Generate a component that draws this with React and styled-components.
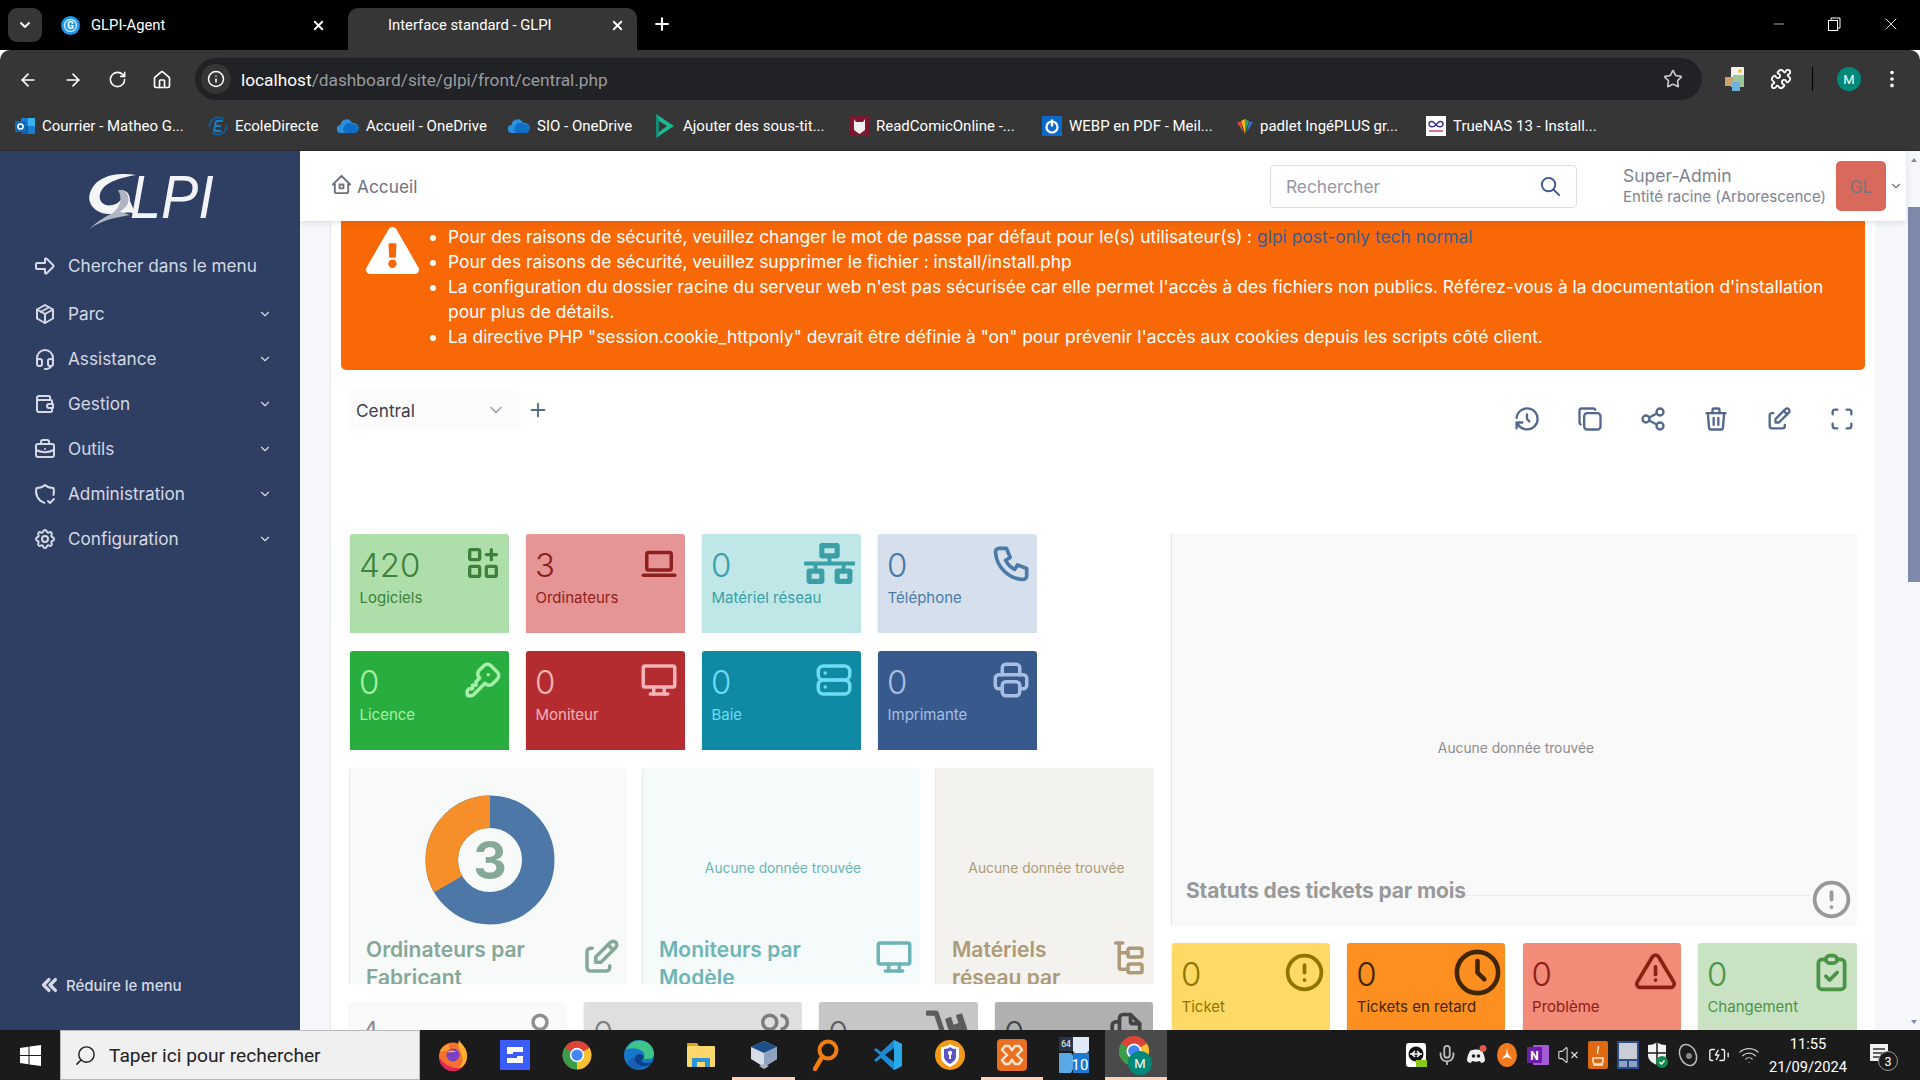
import React from 'react'
import styled, { createGlobalStyle } from 'styled-components'
import {
  TbArrowBigRight, TbPackage, TbHeadset, TbWallet, TbBriefcase, TbShieldCheck, TbSettings,
  TbChevronDown, TbChevronsLeft, TbHome2, TbSearch, TbHistory, TbCopy, TbShare, TbTrash,
  TbEdit, TbMaximize, TbPlus, TbApps, TbDeviceLaptop, TbPhone, TbKey, TbDeviceDesktop,
  TbServer, TbPrinter, TbAlertCircle, TbClock, TbAlertTriangle, TbClipboardCheck,
  TbUser, TbUsers, TbFiles,
} from 'react-icons/tb'
import { FaExclamationTriangle, FaNetworkWired, FaDolly } from 'react-icons/fa'
import {
  ArrowLeft, ArrowRight, RotateCw, Home, Info, Star, Puzzle, EllipsisVertical, ChevronDown,
  X, Plus, Minus, Search, Mic, VolumeX, Wifi, BatteryCharging,
} from 'lucide-react'

const GlobalStyle = createGlobalStyle`
  html, body { margin: 0; padding: 0; height: 100%; overflow: hidden; }
  * { box-sizing: border-box; }
  body { font-family: Inter, "Liberation Sans", sans-serif; }
`

const Screen = styled.div`
  width: 1920px;
  height: 1080px;
  display: flex;
  flex-direction: column;
  overflow: hidden;
`

/* browser chrome */
const TabStrip = styled.div`
  height: 50px;
  background: #000;
  display: flex;
  align-items: flex-end;
  color: #fff;
  font-family: Roboto, sans-serif;
  font-size: 14.8px;
`
const TabMenu = styled.div`
  width: 34px;
  height: 34px;
  margin: 0 0 8px 8px;
  border-radius: 9px;
  background: #363636;
  display: flex;
  align-items: center;
  justify-content: center;
`
const Tab = styled.div`
  width: ${p => p.$w}px;
  height: 42px;
  padding: ${p => p.$active ? '0 12px 8px 40px' : '0 22px 8px 19px'};
  border-radius: 10px 10px 0 0;
  background: ${p => p.$active ? '#363636' : 'transparent'};
  display: flex;
  align-items: center;
  gap: 11px;
`
const TabTitle = styled.span`
  flex: 1;
  white-space: nowrap;
`
const NewTab = styled.div`
  margin: 0 0 14px 15px;
  height: 22px;
`
const WindowControls = styled.div`
  margin-left: auto;
  align-self: flex-start;
  height: 48px;
  display: flex;
  align-items: center;
  gap: 40px;
  padding-right: 19px;
`
const Toolbar = styled.div`
  height: 50px;
  background: #363636;
  border-radius: 10px 10px 0 0;
  display: flex;
  align-items: flex-end;
  color: #fff;
  font-family: Roboto, sans-serif;
`
const NavButtons = styled.div`
  width: 195px;
  height: 42px;
  padding: 1px 0 0 18px;
  display: flex;
  align-items: center;
  gap: 25px;
`
const Omnibox = styled.div`
  width: 1507px;
  height: 42px;
  border-radius: 21px;
  background: #212226;
  display: flex;
  align-items: center;
  padding: 0 19px 0 6px;
`
const InfoBubble = styled.div`
  width: 30px;
  height: 30px;
  border-radius: 50%;
  background: #363636;
  display: flex;
  align-items: center;
  justify-content: center;
  margin-right: 10px;
`
const Url = styled.div`
  flex: 1;
  font-size: 17.3px;
  color: #fff;
  padding-top: 2px;
  span { color: #9a9b9e; }
`
const ToolbarEnd = styled.div`
  flex: 1;
  height: 42px;
  display: flex;
  align-items: center;
  padding-left: 23px;
`
const ExtGap = styled.span`
  width: 25px;
`
const Divider = styled.div`
  width: 1px;
  height: 24px;
  background: #000;
  margin: 0 24px 0 20px;
`
const ProfileDot = styled.div`
  width: 24px;
  height: 24px;
  border-radius: 50%;
  background: #00897b;
  color: #fff;
  font-size: 13px;
  display: flex;
  align-items: center;
  justify-content: center;
  margin-right: 20px;
`
const Bookmarks = styled.div`
  height: 51px;
  background: #363636;
  display: flex;
  align-items: center;
  padding: 2px 0 0 15px;
  color: #fff;
  font-family: Roboto, sans-serif;
  font-size: 15px;
  border-bottom: 1px solid #2b2b2b;
`
const Bookmark = styled.div`
  width: ${p => p.$w}px;
  display: flex;
  align-items: center;
  gap: ${p => p.$gap || 7}px;
  white-space: nowrap;
  svg { flex: none; }
`

/* page body */
const Body = styled.div`
  flex: 1;
  min-height: 0;
  display: flex;
`
const Sidebar = styled.aside`
  width: 300px;
  background: #2f3f64;
  color: #d5d9e3;
  display: flex;
  flex-direction: column;
`
const LogoWrap = styled.div`
  height: 92px;
  padding: 22px 0 0 88px;
  display: flex;
  align-items: flex-start;
`
const LogoText = styled.span`
  font-family: "Liberation Sans", sans-serif;
  font-style: italic;
  font-size: 62px;
  line-height: 48px;
  color: #f2f3f6;
  margin-left: -8px;
  transform: scaleX(0.9);
  transform-origin: left center;
`
const MenuItem = styled.div`
  height: 45px;
  padding: 0 28px 0 33px;
  display: flex;
  align-items: center;
  gap: 11px;
  font-size: 17.2px;
  margin-bottom: ${p => p.$mb || 0}px;
  span { flex: 1; }
`
const Reduce = styled.div`
  margin-top: auto;
  margin-bottom: 32px;
  padding-left: 37px;
  display: flex;
  align-items: center;
  gap: 3px;
  font-size: 15px;
  font-weight: 500;
  height: 26px;
`
const MainCol = styled.div`
  flex: 1;
  min-width: 0;
  display: flex;
  flex-direction: column;
  position: relative;
  background: #f5f7fb;
`
const Header = styled.header`
  height: 70px;
  background: #fff;
  box-shadow: 0 2px 6px rgba(30, 40, 70, 0.12);
  display: flex;
  align-items: center;
  padding: 0 0 0 30px;
  color: #6c7280;
  position: relative;
  z-index: 2;
`
const Crumb = styled.div`
  display: flex;
  align-items: center;
  gap: 4px;
  font-size: 17.3px;
  svg { margin-top: -4px; }
`
const SearchBox = styled.div`
  margin-left: auto;
  width: 307px;
  height: 43px;
  border: 1px solid #dadde3;
  border-radius: 4px;
  display: flex;
  align-items: center;
  justify-content: space-between;
  padding: 0 14px 0 15px;
  font-size: 17.3px;
  color: #9298a6;
`
const UserBlock = styled.div`
  margin-left: 46px;
  width: 213px;
  color: #7d8390;
`
const UserName = styled.div`
  font-size: 17.5px;
  line-height: 22px;
`
const UserEntity = styled.div`
  font-size: 15px;
  line-height: 20px;
`
const UserAvatar = styled.div`
  width: 50px;
  height: 50px;
  border-radius: 5px;
  background: #d9695a;
  color: #73787f;
  font-size: 17.5px;
  display: flex;
  align-items: center;
  justify-content: center;
`
const UserCaret = styled.div`
  width: 20px;
  display: flex;
  justify-content: center;
  color: #6c7280;
`
const Content = styled.div`
  flex: 1;
  min-height: 0;
  overflow: hidden;
  padding: 0 31px 0 30px;
`
const Panel = styled.main`
  background: #fff;
  border-left: 1px solid #e6e8ee;
  padding: 0 10px;
  height: 100%;
`
const Alert = styled.div`
  background: #f96807;
  color: #fff;
  border-radius: 0 0 5px 5px;
  padding: 3px 20px 21px 25px;
  display: flex;
  font-size: 17.4px;
  line-height: 25px;
  svg { flex: none; }
`
const AlertList = styled.ul`
  margin: 0;
  padding: 0 0 0 29px;
  a { color: #3f5a97; text-decoration: none; }
`
const DashBar = styled.div`
  margin-top: 20px;
  height: 40px;
  padding: 0 9px 0 7px;
  display: flex;
  align-items: center;
`
const DashSelect = styled.div`
  width: 173px;
  height: 40px;
  background: #fcfcfd;
  border-radius: 4px;
  padding: 0 15px 0 8px;
  display: flex;
  align-items: center;
  justify-content: space-between;
  font-size: 17.3px;
  color: #39404d;
  margin-right: 6px;
`
const DashActions = styled.div`
  margin-left: auto;
  display: flex;
  gap: 35px;
  color: #53688e;
  padding-top: 18px;
`
const Dashboard = styled.div`
  margin-top: 104px;
  padding-left: 9px;
  display: flex;
  gap: 18px;
  align-items: flex-start;
`
const LeftCol = styled.div`
  width: 804px;
  display: flex;
  flex-direction: column;
  gap: 18px;
`
const RightCol = styled.div`
  width: 685px;
  display: flex;
  flex-direction: column;
  gap: 18px;
`
const CardRow = styled.div`
  display: flex;
  gap: ${p => p.$gap || 17}px;
`
const Card = styled.div`
  flex: 0 0 ${p => p.$w}px;
  min-width: 0;
  height: 99px;
  padding: 0 ${p => p.$pr}px 0 10px;
  background: ${p => p.$bg};
  color: ${p => p.$fg};
  border-radius: 3px 3px 0 0;
  box-shadow: -1px 0 1px rgba(0, 0, 0, 0.06);
  display: flex;
  justify-content: space-between;
`
const CardText = styled.div`
  flex: 1 1 0;
  min-width: 0;
`
const CardNumber = styled.div`
  font-size: 33px;
  font-weight: 300;
  line-height: 40px;
  margin: 11px 0 0 -1px;
`
const CardLabel = styled.div`
  font-size: 15px;
  line-height: 20px;
  margin: 3px 0 0 -0.5px;
  white-space: nowrap;
`
const CardIcon = styled.div`
  height: 58px;
  flex: none;
  display: flex;
  align-items: center;
`
const ChartCard = styled.div`
  flex: 0 0 ${p => p.$w}px;
  height: 216px;
  overflow: hidden;
  background: ${p => p.$bg};
  color: ${p => p.$fg};
  border-radius: 3px 3px 0 0;
  box-shadow: -1px 0 1px rgba(0, 0, 0, 0.1);
`
const ChartArea = styled.div`
  height: 168px;
  display: flex;
  align-items: ${p => p.$top ? 'flex-start' : 'center'};
  justify-content: center;
  padding-top: ${p => p.$pt}px;
  padding-left: 3px;
  font-size: 13.8px;
`
const ChartFoot = styled.div`
  display: flex;
  justify-content: space-between;
  padding: 0 5px 0 16px;
  svg { flex: none; }
`
const ChartTitle = styled.div`
  font-size: 21px;
  font-weight: 600;
  line-height: 28px;
`
const StatusCard = styled.div`
  height: 391px;
  background: #f9f9f9;
  color: #999;
  box-shadow: -1px 0 1px rgba(0, 0, 0, 0.1);
  display: flex;
  flex-direction: column;
`
const StatusArea = styled.div`
  flex: 1;
  display: flex;
  align-items: center;
  justify-content: center;
  padding-top: 86px;
  padding-left: 3px;
  font-size: 13.8px;
  color: #8d8d8d;
`
const StatusFoot = styled.div`
  height: 50px;
  display: flex;
  padding: 0 3px 0 14px;
  align-items: flex-start;
  svg { margin-top: 2px; }
`
const StatusTitle = styled.div`
  font-size: 21px;
  font-weight: 700;
  letter-spacing: -0.15px;
  line-height: 32px;
`
const DottedLine = styled.div`
  flex: 1;
  margin-top: 20px;
  border-top: 1px dotted #ddd;
`
const ScrollTrack = styled.div`
  width: 14px;
  background: #f5f7fb;
  display: flex;
  flex-direction: column;
  align-items: flex-end;
`
const ScrollArrow = styled.div`
  width: 12px;
  height: 17px;
  display: flex;
  align-items: center;
  justify-content: center;
  margin-top: ${p => p.$auto ? 'auto' : '0'};
  &::after {
    content: '';
    border-left: 3.5px solid transparent;
    border-right: 3.5px solid transparent;
    ${p => p.$down ? 'border-top: 4px solid #7f8aab;' : 'border-bottom: 4px solid #7f8aab;'}
  }
`
const ScrollThumb = styled.div`
  width: 12px;
  height: 375px;
  margin-top: 39px;
  background: #7f8aab;
`

/* taskbar */
const Taskbar = styled.footer`
  height: 50px;
  background: #1b1b1b;
  display: flex;
  align-items: stretch;
  font-family: Roboto, sans-serif;
  color: #fff;
`
const StartButton = styled.div`
  width: 60px;
  flex: none;
  display: flex;
  align-items: center;
  justify-content: center;
`
const TaskSearch = styled.div`
  width: 360px;
  flex: none;
  margin-right: 2px;
  background: #f0f0f0;
  border: 1px solid #b8b8b8;
  color: #222;
  font-size: 19.2px;
  display: flex;
  align-items: center;
  gap: 12px;
  padding-left: 13px;
  svg { transform: scaleX(-1); }
`
const TaskApp = styled.div`
  width: 62.1px;
  flex: none;
  display: flex;
  align-items: center;
  justify-content: center;
  background: ${p => p.$active ? '#4a4a4a' : 'transparent'};
  border-bottom: 3px solid ${p => p.$open ? '#ffd2b5' : 'transparent'};
  border-top: 3px solid transparent;
`
const Tray = styled.div`
  margin-left: auto;
  flex: none;
  display: flex;
  align-items: center;
`
const TrayIcon = styled.div`
  width: 30.2px;
  display: flex;
  justify-content: center;
`
const Clock = styled.div`
  width: 88px;
  padding-top: 1px;
  text-align: center;
  font-size: 14.7px;
  line-height: 23px;
`
const Notification = styled.div`
  width: 36px;
  margin-left: 15px;
  margin-right: 17px;
  position: relative;
  display: flex;
`
const NotifBadge = styled.div`
  position: absolute;
  left: 11px;
  top: 9px;
  width: 20px;
  height: 20px;
  border-radius: 50%;
  background: #1b1b1b;
  border: 1.5px solid #999;
  font-size: 12.5px;
  display: flex;
  align-items: center;
  justify-content: center;
`

/* drawn logos */
const GlpiFav = () => (
  <svg width="19" height="19" viewBox="0 0 19 19">
    <circle cx="9.5" cy="9.5" r="9.5" fill="#1d97e6" />
    <circle cx="9.5" cy="9.5" r="6" fill="none" stroke="#bfe4fb" strokeWidth="1.5" />
    <text x="9.5" y="13" textAnchor="middle" fontSize="10" fontWeight="700" fill="#fff" fontFamily="Roboto">G</text>
  </svg>
)
const Swoosh = () => (
  <svg width="50" height="56" viewBox="0 0 50 56">
    <path d="M48 2 C30 -1 8 2 2 20 C-2 32 10 42 24 41 C36 40 44 38 48 42 L42 28 C42 22 40 16 30 17 C36 20 36 26 28 31 C18 35 10 30 12 21 C15 10 30 5 48 2Z" fill="#f4f5f7" />
    <path d="M42 42 C32 44 14 46 2 56 C10 47 20 42 30 38 Z" fill="#aeb4c2" />
    <path d="M30 17 C38 16 42 22 40 30 C38 36 30 40 24 41 C30 36 36 28 30 17Z" fill="#aeb4c2" />
  </svg>
)
const OutlookIcon = () => (
  <svg width="20" height="20" viewBox="0 0 20 20">
    <rect x="6" y="2" width="14" height="16" rx="1" fill="#1b7fd1" />
    <rect x="13" y="2" width="7" height="8" fill="#35b3ee" />
    <rect x="6" y="10" width="7" height="8" fill="#0f5ea8" />
    <rect x="0" y="5" width="11" height="11" rx="1" fill="#0f6cbd" />
    <circle cx="5.5" cy="10.5" r="2.6" fill="none" stroke="#fff" strokeWidth="1.5" />
  </svg>
)
const EcoleIcon = () => (
  <svg width="20" height="20" viewBox="0 0 20 20">
    <circle cx="10" cy="10" r="8.5" fill="none" stroke="#0f5d94" strokeWidth="2" strokeDasharray="20 6" />
    <path d="M8 5h7M7 10h6M6 15h7M8 5 6 15" stroke="#1580c4" strokeWidth="2" fill="none" />
  </svg>
)
const CloudIcon = () => (
  <svg width="22" height="16" viewBox="0 0 22 16">
    <path d="M4 15a4 4 0 0 1-.5-8A6 6 0 0 1 15 5a4.5 4.5 0 0 1 3 10Z" fill="#2a8fdc" />
    <path d="M7 9a5 5 0 0 1 8-3 4.5 4.5 0 0 1 3 9H9a4 4 0 0 1-2-6Z" fill="#0f6fc6" />
  </svg>
)
const KapwingIcon = () => (
  <svg width="18" height="24" viewBox="0 0 18 24">
    <path d="M0 0 18 12 0 24l3-6 8-6-8-5Z" fill="#1cb890" />
    <path d="M0 0v24l3-6V6Z" fill="#128c78" />
  </svg>
)
const ComicIcon = () => (
  <svg width="19" height="20" viewBox="0 0 19 20">
    <rect width="19" height="20" fill="#7c1730" />
    <path d="M4 3l2 3h7l2-3v11l-5.500 4L4 14Z" fill="#f0f0f0" />
  </svg>
)
const WebpIcon = () => (
  <svg width="20" height="20" viewBox="0 0 20 20">
    <rect width="20" height="20" fill="#0b6ac8" />
    <circle cx="10" cy="11" r="5.500" fill="none" stroke="#fff" strokeWidth="2.2" />
    <path d="M10 3.500v7" stroke="#fff" strokeWidth="2.4" />
  </svg>
)
const PadletIcon = () => (
  <svg width="16" height="20" viewBox="0 0 16 20">
    <path d="M0 6 6 16 4 6Z" fill="#e4443c" />
    <path d="M4 5 8 18 8 3Z" fill="#f6b01d" />
    <path d="M8 3 8 18 12 5Z" fill="#2ca85a" />
    <path d="M12 6 10 16 16 6Z" fill="#3a6fd8" />
  </svg>
)
const TrueNasIcon = () => (
  <svg width="20" height="20" viewBox="0 0 20 20">
    <rect width="20" height="20" fill="#fff" />
    <path d="M10 9C7 4 3 5 3 8s4 4 7 1c3-5 7-4 7-1s-4 4-7 1" fill="none" stroke="#3b2e8f" strokeWidth="1.4" />
    <rect x="3" y="14" width="14" height="2" fill="#d9708b" />
  </svg>
)
const MultiExtIcon = () => (
  <svg width="20" height="26" viewBox="0 0 20 26">
    <rect x="6" y="1" width="13" height="20" rx="1" fill="#f2f2f2" />
    <rect x="8" y="9" width="11" height="12" fill="#9ac79a" />
    <circle cx="15" cy="5" r="2" fill="#f5c242" />
    <rect x="0" y="11" width="8" height="9" fill="#c9a36b" />
    <rect x="7" y="16" width="8" height="9" fill="#6fb1dc" />
  </svg>
)
const WinLogo = () => (
  <svg width="21" height="21" viewBox="0 0 21 21">
    <path d="M0 3l8.500-1.200v8.200H0ZM9.500 1.600 21 0v10H9.500ZM0 11h8.500v8.200L0 18ZM9.500 11H21v10l-11.500-1.600Z" fill="#fff" />
  </svg>
)
const Firefox = () => (
  <svg width="30" height="32" viewBox="0 0 30 32">
    <circle cx="15" cy="17.500" r="14" fill="#f5712c" />
    <path d="M21 1c2 4 8 7 8 16a14 14 0 0 1-14 14c8-2 11-8 9-14-1-5-5-8-3-16Z" fill="#ffb22e" />
    <path d="M2 12c3-5 7-7 10-7-2 3-1 5 2 6-6 0-9 2-12 1Z" fill="#ff9a2e" />
    <path d="M1 18a14 14 0 0 0 24 10c-8 3-17 0-24-10Z" fill="#e3235e" />
    <circle cx="15" cy="16" r="6.500" fill="#7a3fc2" />
    <path d="M9 13c3-2 7-2 9 0-4 0-7 1-9 0Z" fill="#ffb22e" />
  </svg>
)
const Scaleway = () => (
  <svg width="30" height="30" viewBox="0 0 30 30">
    <rect width="30" height="30" fill="#3b5cff" />
    <path d="M7 7h16v5H13v2H7ZM23 23H7v-5h10v-2h6Z" fill="#fff" />
  </svg>
)
const Chrome = ({ size = 30 }) => (
  <svg width={size} height={size} viewBox="0 0 48 48">
    <circle cx="24" cy="24" r="23" fill="#db4437" />
    <path d="M24 24 44 12.500A23 23 0 0 1 24 47Z" fill="#fbc02d" />
    <path d="M24 24 24 47A23 23 0 0 1 4 12.500Z" fill="#3a9d4a" />
    <circle cx="24" cy="24" r="11.500" fill="#fff" />
    <circle cx="24" cy="24" r="9" fill="#4285f4" />
  </svg>
)
const Edge = () => (
  <svg width="30" height="30" viewBox="0 0 30 30">
    <circle cx="15" cy="15" r="15" fill="#1477c9" />
    <path d="M2 10C5 2 13-1 20 1c6 2 10 7 10 13 0 4-3 5-6 5h-6c3-2 3-6 0-8-6-4-13-3-16-1Z" fill="#3cc48a" />
    <path d="M20 17c-2-4-8-4-9 1-1 5 5 9 11 8 3-1 5-2 6-4-5 2-10 1-12-2 1 1 3 0 4-3Z" fill="#0b3f86" />
    <path d="M11 18c-1 5 5 9 11 8-7 4-15 3-18-3 2-5 5-7 7-5Z" fill="#1a5fb4" />
  </svg>
)
const Explorer = () => (
  <svg width="28" height="26" viewBox="0 0 28 26">
    <path d="M0 2a1 1 0 0 1 1-1h9l2 3h-12Z" fill="#dba21e" />
    <rect y="4" width="28" height="21" rx="1" fill="#f9d76b" />
    <path d="M5 25v-8a1 1 0 0 1 1-1h16a1 1 0 0 1 1 1v8h-5v-5h-8v5Z" fill="#2e93d8" />
  </svg>
)
const VBox = () => (
  <svg width="28" height="30" viewBox="0 0 28 30">
    <path d="M14 1 27 7v12l-13 8L1 19V7Z" fill="#d7dde8" />
    <path d="M14 1 27 7 14 13 1 7Z" fill="#1d4f8a" />
    <path d="M14 13v14l13-8V7Z" fill="#8ea2bd" />
    <path d="M9 26l5 3 5-3-5-2Z" fill="#aab6c6" />
  </svg>
)
const Magnifier = () => (
  <svg width="26" height="32" viewBox="0 0 26 32">
    <circle cx="15" cy="11" r="8.500" fill="none" stroke="#ef7d0f" strokeWidth="4" />
    <path d="M9 18 2 30" stroke="#ef7d0f" strokeWidth="4.500" strokeLinecap="round" />
  </svg>
)
const VSCode = () => (
  <svg width="28" height="30" viewBox="0 0 28 30">
    <path d="M20 0 28 4v22l-8 4L7 18 2 22 0 20l6-5-6-5 2-2 5 4Z" fill="#1f8ad2" />
    <path d="M20 8 11 15l9 7Z" fill="#1b1b1b" />
    <path d="M20 0 28 4v22l-8 4Z" fill="#2ba8ea" />
  </svg>
)
const ShieldApp = () => (
  <svg width="30" height="30" viewBox="0 0 30 30">
    <circle cx="15" cy="15" r="15" fill="#f49a1a" />
    <path d="M6 7c5 0 7-2 9-3 2 1 4 3 9 3v10c0 5-5 8-9 10-4-2-9-5-9-10Z" fill="#fff" />
    <path d="M9 9c3 0 5-1 6-2 1 1 3 2 6 2v7c0 4-3 6-6 8-3-2-6-4-6-8Z" fill="#5a54c4" />
    <circle cx="15" cy="13" r="2.200" fill="#fff" />
    <rect x="14" y="14" width="2" height="5" fill="#fff" />
  </svg>
)
const Xampp = () => (
  <svg width="30" height="32" viewBox="0 0 30 32">
    <rect width="30" height="32" rx="4" fill="#e96f21" />
    <path d="M8 7h4l3 4 3-4h4l3 4-5 5 5 5-3 4h-4l-3-4-3 4H8l-3-4 5-5-5-5Z" fill="none" stroke="#fbe3cf" strokeWidth="2.400" />
  </svg>
)
const WinTen = () => (
  <svg width="30" height="36" viewBox="0 0 30 36">
    <rect width="14" height="14" fill="#273649" />
    <text x="7" y="10" textAnchor="middle" fontSize="8.500" fill="#fff" fontFamily="Roboto">64</text>
    <path d="M14 0h16v14L21 22 14 14Z" fill="#dfeaf6" />
    <path d="M0 16h12l6 8-6 12H0Z" fill="#5aa9e6" />
    <rect x="14" y="16" width="16" height="20" fill="#1f78d1" />
    <text x="21" y="33" textAnchor="middle" fontSize="15" fill="#fff" fontFamily="Roboto">10</text>
  </svg>
)
const ChromeProfile = () => (
  <svg width="34" height="42" viewBox="0 0 34 42">
    <g transform="translate(0 2)">
      <circle cx="15" cy="15" r="15" fill="#db4437" />
      <path d="M15 15 28 7.500A15 15 0 0 1 15 30Z" fill="#fbc02d" />
      <path d="M15 15 15 30A15 15 0 0 1 2 7.500Z" fill="#3a9d4a" />
      <circle cx="15" cy="15" r="7.500" fill="#fff" />
      <circle cx="15" cy="15" r="5.800" fill="#4285f4" />
    </g>
    <circle cx="21" cy="29" r="12" fill="#00897b" />
    <text x="21" y="34" textAnchor="middle" fontSize="13" fill="#fff" fontFamily="Roboto">M</text>
  </svg>
)
const TeamViewer = () => (
  <svg width="22" height="24" viewBox="0 0 22 24">
    <rect width="20" height="24" rx="3" fill="#fff" />
    <circle cx="10" cy="11" r="7.500" fill="#111" />
    <path d="M4 11h12M6 11l3-3M6 11l3 3M14 11l-3-3M14 11l-3 3" stroke="#fff" strokeWidth="1.500" />
    <rect x="10" y="17" width="11" height="7" fill="#8bc816" />
  </svg>
)
const Discord = () => (
  <svg width="22" height="20" viewBox="0 0 22 20">
    <path d="M4 6c3-2 9-2 12 0 2 3 3 7 3 10-1 1-3 2-4 2l-1-2c-3 1-5 1-8 0l-1 2c-1 0-3-1-4-2 0-3 1-7 3-10Z" fill="#f0f0f0" />
    <circle cx="7.500" cy="11" r="1.800" fill="#1b1b1b" />
    <circle cx="12.500" cy="11" r="1.800" fill="#1b1b1b" />
    <circle cx="17" cy="3.500" r="3.500" fill="#e0584d" />
  </svg>
)
const RssApp = () => (
  <svg width="20" height="24" viewBox="0 0 20 24">
    <ellipse cx="10" cy="12" rx="10" ry="12" fill="#f47a1f" />
    <path d="M10 5l1 6 4 5-5-2-5 2 4-5Z" fill="#fff" />
  </svg>
)
const OneNote = () => (
  <svg width="22" height="24" viewBox="0 0 22 24">
    <rect x="6" y="2" width="16" height="20" rx="1" fill="#a45cd6" />
    <rect x="0" y="4" width="15" height="16" fill="#6b1fa8" />
    <text x="7.500" y="17" textAnchor="middle" fontSize="12" fontWeight="700" fill="#fff" fontFamily="Roboto">N</text>
  </svg>
)
const JavaApp = () => (
  <svg width="20" height="28" viewBox="0 0 20 28">
    <rect width="20" height="28" rx="2" fill="#dd6a13" />
    <path d="M5 17h10v3a3 3 0 0 1-3 3H8a3 3 0 0 1-3-3ZM10 5c2 3-2 4 0 8M5 24h10" fill="none" stroke="#fbe3cf" strokeWidth="1.500" />
  </svg>
)
const FloppyApp = () => (
  <svg width="22" height="28" viewBox="0 0 22 28">
    <rect width="22" height="28" fill="#2f4d85" />
    <rect x="2" y="2" width="18" height="16" fill="#c9cdd6" />
    <rect x="2" y="20" width="8" height="6" fill="#8ea2c7" />
    <rect x="12" y="20" width="8" height="6" fill="#8ea2c7" />
  </svg>
)
const DefenderApp = () => (
  <svg width="22" height="28" viewBox="0 0 22 28">
    <path d="M1 4c4 0 7-1 9-3 2 2 5 3 9 3v10c0 5-4 8-9 10-5-2-9-5-9-10Z" fill="#f2f2f2" />
    <path d="M10 1v23M1 12h18" stroke="#1b1b1b" strokeWidth="1.500" />
    <circle cx="15" cy="21" r="6" fill="#12884c" />
    <path d="M12.500 21l2 2 3-3.500" stroke="#fff" strokeWidth="1.300" fill="none" />
  </svg>
)
const Speaker = () => (
  <svg width="22" height="28" viewBox="0 0 22 28">
    <ellipse cx="10" cy="14" rx="8" ry="11" transform="rotate(-25 10 14)" fill="none" stroke="#bbb" strokeWidth="1.500" />
    <circle cx="11" cy="15" r="3" fill="#888" />
  </svg>
)
const NotifIcon = () => (
  <svg width="24" height="26" viewBox="0 0 24 26">
    <path d="M3 2h18v17h-18Z" fill="#f2f2f2" />
    <path d="M6 7h12M6 11h12M6 15h8" stroke="#333" strokeWidth="1.400" />
  </svg>
)
const TreeIcon = () => (
  <svg width="42" height="42" viewBox="0 0 24 24" fill="none" stroke="currentColor" strokeWidth="2" strokeLinecap="round">
    <path d="M5 4h4M7 4v14a1 1 0 0 0 1 1h3M7 9.500h4" />
    <rect x="12" y="7" width="8" height="5" rx="1" />
    <rect x="12" y="16" width="8" height="5" rx="1" />
  </svg>
)
const Donut = () => (
  <svg width="130" height="130" viewBox="0 0 130 130">
    <circle cx="65" cy="65" r="48.250" fill="none" stroke="#4c77a7" strokeWidth="32.500" />
    <path d="M65 .5A64.500 64.500 0 0 0 9.100 97.250L37.300 81A32 32 0 0 1 65 33Z" fill="#f68f2a" />
    <text x="65" y="84" textAnchor="middle" fontSize="52" fontWeight="700" fill="#85a898" fontFamily="Inter">3</text>
  </svg>
)

const menu = [
  ['Parc', TbPackage],
  ['Assistance', TbHeadset],
  ['Gestion', TbWallet],
  ['Outils', TbBriefcase],
  ['Administration', TbShieldCheck],
  ['Configuration', TbSettings],
]

const rowOne = [
  ['420', 'Logiciels', TbApps, 40, '#aedfab', '#3d813a', 6],
  ['3', 'Ordinateurs', TbDeviceLaptop, 42, '#e59595', '#8e1f1f', 5],
  ['0', 'Matériel réseau', FaNetworkWired, 51, '#bfe7e8', '#3a9fa6', 6],
  ['0', 'Téléphone', TbPhone, 44, '#d5e0ec', '#4b7aa9', 3],
]
const rowTwo = [
  ['0', 'Licence', TbKey, 42, '#28ae3f', '#a7eeab', 5],
  ['0', 'Moniteur', TbDeviceDesktop, 42, '#b42b30', '#f4b4b8', 5],
  ['0', 'Baie', TbServer, 42, '#0f89a4', '#6ddcf2', 6],
  ['0', 'Imprimante', TbPrinter, 42, '#37598c', '#a8bfe2', 5],
]
const rowFour = [
  ['4', TbUser, 42, '#fafafa', '#8f8f8f', 217],
  ['0', TbUsers, 42, '#dfdfdf', '#7d7d7d', 218],
  ['0', FaDolly, 46, '#c6c6c6', '#5c5c5c', 159],
  ['0', TbFiles, 44, '#b0b0b0', '#444', 158],
]
const ticketRow = [
  ['0', 'Ticket', TbAlertCircle, 45, '#ffd965', '#8f7500', 3, 158],
  ['0', 'Tickets en retard', TbClock, 55, '#fc8f1f', '#3f2600', 0, 158],
  ['0', 'Problème', TbAlertTriangle, 45, '#f28b78', '#8d2013', 3, 158],
  ['0', 'Changement', TbClipboardCheck, 45, '#c9e2c3', '#4b9446', 3, 159],
]

const StatCard = ({ number, label, Icon, size, bg, fg, w, pr = 6 }) => (
  <Card $bg={bg} $fg={fg} $w={w} $pr={pr}>
    <CardText>
      <CardNumber>{number}</CardNumber>
      {label && <CardLabel>{label}</CardLabel>}
    </CardText>
    <CardIcon><Icon size={size} /></CardIcon>
  </Card>
)

const tasks = [
  [Firefox], [Scaleway], [Chrome], [Edge], [Explorer], [VBox, true], [Magnifier], [VSCode],
  [ShieldApp], [Xampp, true], [WinTen], [ChromeProfile, true, true],
]

const App = () => (
  <Screen>
    <GlobalStyle />
    <TabStrip>
      <TabMenu><ChevronDown size={16} strokeWidth={3} /></TabMenu>
      <Tab $w={306}>
        <GlpiFav />
        <TabTitle>GLPI-Agent</TabTitle>
        <X size={15} strokeWidth={3} />
      </Tab>
      <Tab $w={289} $active>
        <TabTitle>Interface standard - GLPI</TabTitle>
        <X size={15} strokeWidth={3} />
      </Tab>
      <NewTab><Plus size={20} strokeWidth={2.5} /></NewTab>
      <WindowControls>
        <Minus size={16} strokeWidth={1} />
        <svg width="14" height="14" viewBox="0 0 14 14" fill="none" stroke="#fff">
          <rect x="1.500" y="3.500" width="9" height="10" />
          <path d="M4 3V1h9v10h-2" />
        </svg>
        <X size={20} strokeWidth={1} />
      </WindowControls>
    </TabStrip>
    <Toolbar>
      <NavButtons>
        <ArrowLeft size={20} />
        <ArrowRight size={20} />
        <RotateCw size={19} />
        <Home size={20} />
      </NavButtons>
      <Omnibox>
        <InfoBubble><Info size={18} /></InfoBubble>
        <Url>localhost<span>/dashboard/site/glpi/front/central.php</span></Url>
        <Star size={20} color="#c7c7c7" strokeWidth={2} />
      </Omnibox>
      <ToolbarEnd>
        <MultiExtIcon />
        <ExtGap />
        <Puzzle size={22} color="#fff" strokeWidth={2} />
        <Divider />
        <ProfileDot>M</ProfileDot>
        <EllipsisVertical size={22} />
      </ToolbarEnd>
    </Toolbar>
    <Bookmarks>
      <Bookmark $w={193}><OutlookIcon />Courrier - Matheo G...</Bookmark>
      <Bookmark $w={129}><EcoleIcon />EcoleDirecte</Bookmark>
      <Bookmark $w={171}><CloudIcon />Accueil - OneDrive</Bookmark>
      <Bookmark $w={148}><CloudIcon />SIO - OneDrive</Bookmark>
      <Bookmark $w={194} $gap={9}><KapwingIcon />Ajouter des sous-tit...</Bookmark>
      <Bookmark $w={192}><ComicIcon />ReadComicOnline -...</Bookmark>
      <Bookmark $w={195}><WebpIcon />WEBP en PDF - Meil...</Bookmark>
      <Bookmark $w={189}><PadletIcon />padlet IngéPLUS gr...</Bookmark>
      <Bookmark $w={200}><TrueNasIcon />TrueNAS 13 - Install...</Bookmark>
    </Bookmarks>
    <Body>
      <Sidebar>
        <LogoWrap><Swoosh /><LogoText>LPI</LogoText></LogoWrap>
        <MenuItem $mb={3}>
          <TbArrowBigRight size={24} />
          <span>Chercher dans le menu</span>
        </MenuItem>
        {menu.map(([label, Icon]) => (
          <MenuItem key={label}>
            <Icon size={24} />
            <span>{label}</span>
            <TbChevronDown size={14} />
          </MenuItem>
        ))}
        <Reduce><TbChevronsLeft size={26} strokeWidth={3} />Réduire le menu</Reduce>
      </Sidebar>
      <MainCol>
        <Header>
          <Crumb><TbHome2 size={23} />Accueil</Crumb>
          <SearchBox>Rechercher<TbSearch size={23} color="#3b5591" /></SearchBox>
          <UserBlock>
            <UserName>Super-Admin</UserName>
            <UserEntity>Entité racine (Arborescence)</UserEntity>
          </UserBlock>
          <UserAvatar>GL</UserAvatar>
          <UserCaret><TbChevronDown size={14} /></UserCaret>
        </Header>
        <Content>
          <Panel>
            <Alert>
              <FaExclamationTriangle size={53} />
              <AlertList>
                <li>Pour des raisons de sécurité, veuillez changer le mot de passe par défaut pour le(s) utilisateur(s) : <a href="#a">glpi post-only tech normal</a></li>
                <li>Pour des raisons de sécurité, veuillez supprimer le fichier : install/install.php</li>
                <li>La configuration du dossier racine du serveur web n'est pas sécurisée car elle permet l'accès à des fichiers non publics. Référez-vous à la documentation d'installation pour plus de détails.</li>
                <li>La directive PHP "session.cookie_httponly" devrait être définie à "on" pour prévenir l'accès aux cookies depuis les scripts côté client.</li>
              </AlertList>
            </Alert>
            <DashBar>
              <DashSelect>Central<TbChevronDown size={20} color="#9aa0ad" /></DashSelect>
              <TbPlus size={22} color="#53688e" />
              <DashActions>
                <TbHistory size={28} />
                <TbCopy size={28} />
                <TbShare size={28} />
                <TbTrash size={28} />
                <TbEdit size={28} />
                <TbMaximize size={28} />
              </DashActions>
            </DashBar>
            <Dashboard>
              <LeftCol>
                <CardRow>
                  {rowOne.map(([number, label, Icon, size, bg, fg, pr]) => (
                    <StatCard key={label} number={number} label={label} Icon={Icon} size={size} bg={bg} fg={fg} w={159} pr={pr} />
                  ))}
                </CardRow>
                <CardRow>
                  {rowTwo.map(([number, label, Icon, size, bg, fg, pr]) => (
                    <StatCard key={label} number={number} label={label} Icon={Icon} size={size} bg={bg} fg={fg} w={159} pr={pr} />
                  ))}
                </CardRow>
                <CardRow $gap={16}>
                  <ChartCard $w={277} $bg="#f8fafa" $fg="#85a898">
                    <ChartArea $top $pt={27}><Donut /></ChartArea>
                    <ChartFoot>
                      <ChartTitle>Ordinateurs par Fabricant</ChartTitle>
                      <TbEdit size={42} />
                    </ChartFoot>
                  </ChartCard>
                  <ChartCard $w={277} $bg="#f5fbfb" $fg="#6db5b5">
                    <ChartArea $pt={32}>Aucune donnée trouvée</ChartArea>
                    <ChartFoot>
                      <ChartTitle>Moniteurs par Modèle</ChartTitle>
                      <TbDeviceDesktop size={42} />
                    </ChartFoot>
                  </ChartCard>
                  <ChartCard $w={218} $bg="#f3f2ee" $fg="#ae9a77">
                    <ChartArea $pt={32}>Aucune donnée trouvée</ChartArea>
                    <ChartFoot>
                      <ChartTitle>Matériels réseau par Type</ChartTitle>
                      <TreeIcon />
                    </ChartFoot>
                  </ChartCard>
                </CardRow>
                <CardRow>
                  {rowFour.map(([number, Icon, size, bg, fg, w]) => (
                    <StatCard key={bg} number={number} Icon={Icon} size={size} bg={bg} fg={fg} w={w} />
                  ))}
                </CardRow>
              </LeftCol>
              <RightCol>
                <StatusCard>
                  <StatusArea>Aucune donnée trouvée</StatusArea>
                  <StatusFoot>
                    <StatusTitle>Statuts des tickets par mois</StatusTitle>
                    <DottedLine />
                    <TbAlertCircle size={45} />
                  </StatusFoot>
                </StatusCard>
                <CardRow $gap={17.3}>
                  {ticketRow.map(([number, label, Icon, size, bg, fg, pr, w]) => (
                    <StatCard key={label} number={number} label={label} Icon={Icon} size={size} bg={bg} fg={fg} pr={pr} w={w} />
                  ))}
                </CardRow>
              </RightCol>
            </Dashboard>
          </Panel>
        </Content>
      </MainCol>
      <ScrollTrack>
        <ScrollArrow />
        <ScrollThumb />
        <ScrollArrow $down $auto />
      </ScrollTrack>
    </Body>
    <Taskbar>
      <StartButton><WinLogo /></StartButton>
      <TaskSearch><Search size={23} color="#222" strokeWidth={1.5} />Taper ici pour rechercher</TaskSearch>
      {tasks.map(([Logo, open, active], i) => (
        <TaskApp key={i} $open={open} $active={active}><Logo /></TaskApp>
      ))}
      <Tray>
        <TrayIcon><TeamViewer /></TrayIcon>
        <TrayIcon><Mic size={22} color="#bbb" /></TrayIcon>
        <TrayIcon><Discord /></TrayIcon>
        <TrayIcon><RssApp /></TrayIcon>
        <TrayIcon><OneNote /></TrayIcon>
        <TrayIcon><VolumeX size={22} color="#ddd" strokeWidth={1.2} /></TrayIcon>
        <TrayIcon><JavaApp /></TrayIcon>
        <TrayIcon><FloppyApp /></TrayIcon>
        <TrayIcon><DefenderApp /></TrayIcon>
        <TrayIcon><Speaker /></TrayIcon>
        <TrayIcon><BatteryCharging size={22} color="#eee" strokeWidth={1.5} /></TrayIcon>
        <TrayIcon><Wifi size={22} color="#ccc" strokeWidth={1.3} /></TrayIcon>
        <Clock>11:55<br />21/09/2024</Clock>
        <Notification><NotifIcon /><NotifBadge>3</NotifBadge></Notification>
      </Tray>
    </Taskbar>
  </Screen>
)

export default App
